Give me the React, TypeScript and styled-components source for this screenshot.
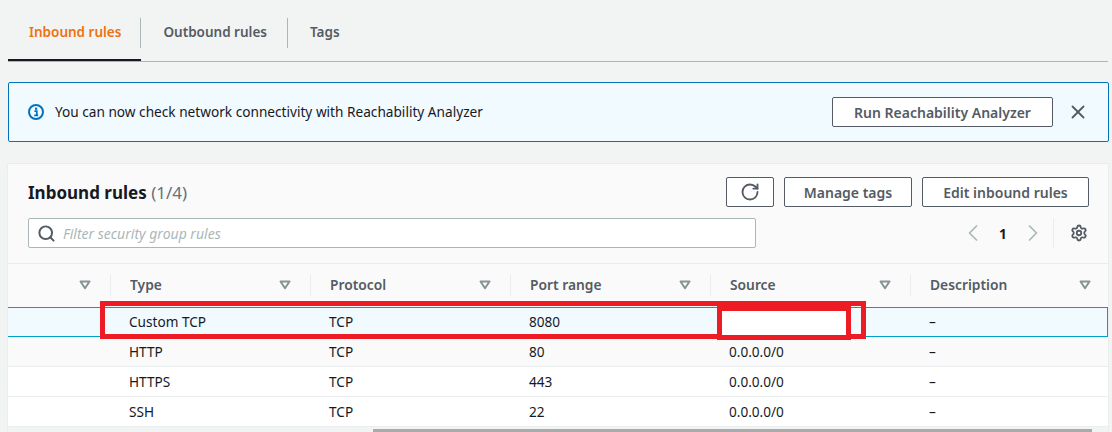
import { ChevronLeft, ChevronRight, RotateCw, Search, Settings, X } from 'lucide-react';
import styled, { createGlobalStyle } from 'styled-components';

const COLUMNS = ['', 'Type', 'Protocol', 'Port range', 'Source', 'Description'];

const RULES = [
  { type: 'Custom TCP', protocol: 'TCP', port: '8080', source: '', description: '–' },
  { type: 'HTTP', protocol: 'TCP', port: '80', source: '0.0.0.0/0', description: '–' },
  { type: 'HTTPS', protocol: 'TCP', port: '443', source: '0.0.0.0/0', description: '–' },
  { type: 'SSH', protocol: 'TCP', port: '22', source: '0.0.0.0/0', description: '–' },
];

const SortCaret = () => (
  <CaretIcon viewBox="0 0 12 10" aria-hidden="true">
    <path d="M1.5 1.5h9L6 8.2z" fill="none" stroke="currentColor" strokeWidth="2" strokeLinejoin="round" />
  </CaretIcon>
);

const InfoIcon = () => (
  <AlertIcon viewBox="0 0 16 16" aria-hidden="true">
    <circle cx="8" cy="8" r="7" fill="none" stroke="currentColor" strokeWidth="2" />
    <rect x="7" y="3.6" width="2.2" height="2.2" fill="currentColor" />
    <path d="M6.4 7.2h2.4v4M6.2 11.4h4" fill="none" stroke="currentColor" strokeWidth="1.7" />
  </AlertIcon>
);

export default function App() {
  return (
    <Page>
      <GlobalStyle />
      <Tabs>
        <Tab $active>Inbound rules</Tab>
        <Tab>Outbound rules</Tab>
        <Tab $last>Tags</Tab>
      </Tabs>

      <Alert>
        <InfoIcon />
        <AlertText>You can now check network connectivity with Reachability Analyzer</AlertText>
        <Button $width={221}>Run Reachability Analyzer</Button>
        <CloseButton aria-label="Close">
          <X size={22} strokeWidth={2} />
        </CloseButton>
      </Alert>

      <Panel>
        <PanelHeader>
          <TitleRow>
            <Title>
              Inbound rules <Counter>(1/4)</Counter>
            </Title>
            <Actions>
              <Button $width={48} aria-label="Refresh">
                <RotateCw size={20} strokeWidth={2.2} />
              </Button>
              <Button $width={128}>Manage tags</Button>
              <Button $width={167}>Edit inbound rules</Button>
            </Actions>
          </TitleRow>
          <FilterRow>
            <FilterBox>
              <SearchIcon />
              <FilterInput placeholder="Filter security group rules" />
            </FilterBox>
            <Pagination>
              <PageArrow />
              <PageNumber>1</PageNumber>
              <PageArrowNext />
              <PageDivider />
              <GearIcon />
            </Pagination>
          </FilterRow>
        </PanelHeader>

        <Table>
          <HeaderRow>
            {COLUMNS.map((name, index) => (
              <HeaderCell key={name || 'select'} $first={index === 0}>
                <span>{name}</span>
                <SortCaret />
              </HeaderCell>
            ))}
          </HeaderRow>

          {RULES.map((rule, index) => (
            <Row key={rule.type} $selected={index === 0} $shaded={index === 1}>
              <Cell />
              <Cell>{rule.type}</Cell>
              <Cell>{rule.protocol}</Cell>
              <Cell>{rule.port}</Cell>
              <Cell>{rule.source}</Cell>
              <Cell>{rule.description}</Cell>
            </Row>
          ))}

          <ScrollTrack>
            <ScrollThumb />
          </ScrollTrack>

          <RowMark />
          <SourceMark />
        </Table>
      </Panel>
    </Page>
  );
}

const GlobalStyle = createGlobalStyle`
  html,
  body {
    margin: 0;
    padding: 0;
    height: 432px;
    overflow: hidden;
    background: #f2f3f3;
  }

  * {
    box-sizing: border-box;
  }
`;

const Page = styled.div`
  width: 1112px;
  height: 432px;
  overflow: hidden;
  padding-left: 8px;
  font-family: 'Noto Sans', 'Open Sans', sans-serif;
  font-size: 13.6px;
  color: #16191f;
`;

const Tabs = styled.div`
  display: flex;
  align-items: center;
  width: 1100px;
  height: 62px;
  border-bottom: 1px solid #aab7b8;
`;

const Tab = styled.div<{ $active?: boolean; $last?: boolean }>`
  position: relative;
  display: flex;
  align-items: center;
  height: 61px;
  padding: 4px 20px 0 21px;
  font-size: 13.5px;
  font-weight: 600;
  color: ${({ $active }) => ($active ? '#ec7211' : '#545b64')};
  border-bottom: 2px solid ${({ $active }) => ($active ? '#16191f' : 'transparent')};

  & + & {
    padding-left: 22px;
    padding-right: 21px;
  }

  &::after {
    content: '';
    display: ${({ $last }) => ($last ? 'none' : 'block')};
    position: absolute;
    top: 18px;
    right: 0;
    width: 1px;
    height: 30px;
    background: #aab7b8;
  }
`;

const Alert = styled.div`
  display: flex;
  align-items: center;
  width: 1101px;
  height: 60px;
  margin-top: 20px;
  padding: 0 19px;
  background: #f1faff;
  border: 1px solid #0073bb;
  border-radius: 2px;
`;

const AlertIcon = styled.svg`
  width: 16px;
  height: 16px;
  margin-right: 11px;
  color: #0073bb;
  flex-shrink: 0;
`;

const AlertText = styled.div`
  flex: 1;
  padding-bottom: 2px;
  font-size: 13.65px;
`;

const Button = styled.button<{ $width: number }>`
  display: flex;
  justify-content: center;
  align-items: center;
  width: ${({ $width }) => $width}px;
  height: 30px;
  padding: 0;
  font-family: inherit;
  font-size: 14px;
  font-weight: 600;
  color: #545b64;
  background: #fff;
  border: 1px solid #545b64;
  border-radius: 2px;
`;

const CloseButton = styled.button`
  display: flex;
  justify-content: center;
  align-items: center;
  width: 22px;
  height: 22px;
  margin-left: 14px;
  padding: 0;
  color: #545b64;
  background: none;
  border: none;
`;

const Panel = styled.div`
  width: 1102px;
  height: 269px;
  margin: 21px 0 0 -1px;
  background: #fafafa;
  border: 1px solid #eaeded;
  border-bottom: none;
`;

const PanelHeader = styled.div`
  height: 100px;
  padding: 13px 19px 0 20px;
  border-bottom: 1px solid #eaeded;
`;

const TitleRow = styled.div`
  display: flex;
  justify-content: space-between;
  align-items: center;
  height: 30px;
`;

const Title = styled.h2`
  margin: 0;
  font-size: 17px;
  font-weight: 700;
  color: #16191f;
`;

const Counter = styled.span`
  font-weight: 400;
  color: #687078;
`;

const Actions = styled.div`
  display: flex;
  gap: 10px;
`;

const FilterRow = styled.div`
  display: flex;
  justify-content: space-between;
  align-items: center;
  margin-top: 11px;
  height: 30px;
`;

const FilterBox = styled.div`
  display: flex;
  align-items: center;
  gap: 7px;
  width: 728px;
  height: 30px;
  padding-left: 8px;
  background: #fff;
  border: 1px solid #aab7b8;
  border-radius: 2px;
`;

const SearchIcon = styled(Search).attrs({ size: 19, strokeWidth: 2.5 })`
  color: #545b64;
  flex-shrink: 0;
`;

const FilterInput = styled.input`
  flex: 1;
  padding: 0;
  font-family: inherit;
  font-size: 14px;
  font-style: italic;
  background: none;
  border: none;
  outline: none;

  &::placeholder {
    color: #aab7b8;
    opacity: 1;
  }
`;

const Pagination = styled.div`
  display: flex;
  align-items: center;
  height: 30px;
`;

const PageArrow = styled(ChevronLeft).attrs({ size: 28, strokeWidth: 1.5 })`
  color: #aab7b8;
`;

const PageArrowNext = styled(ChevronRight).attrs({ size: 28, strokeWidth: 1.5 })`
  color: #aab7b8;
`;

const PageNumber = styled.span`
  width: 32px;
  text-align: center;
  font-size: 13.6px;
  font-weight: 700;
  color: #16191f;
`;

const PageDivider = styled.span`
  width: 1px;
  height: 30px;
  margin: 0 16px 0 6px;
  background: #eaeded;
`;

const GearIcon = styled(Settings).attrs({ size: 18, strokeWidth: 2.4 })`
  margin-right: 1px;
  color: #545b64;
`;

const Table = styled.div`
  position: relative;
`;

const HeaderRow = styled.div`
  display: grid;
  grid-template-columns: 102px repeat(5, 200px);
  height: 43px;
`;

const HeaderCell = styled.div<{ $first?: boolean }>`
  position: relative;
  display: flex;
  justify-content: space-between;
  align-items: center;
  padding: 0 19px 2px 20px;
  font-size: 13.8px;
  font-weight: 600;
  color: #545b64;

  &::after {
    content: '';
    display: ${({ $first }) => ($first ? 'none' : 'block')};
    position: absolute;
    left: 0;
    top: 11px;
    width: 1px;
    height: 21px;
    background: #eaeded;
  }
`;

const CaretIcon = styled.svg`
  width: 12px;
  height: 10px;
  color: #879596;
`;

const Row = styled.div<{ $selected?: boolean; $shaded?: boolean }>`
  display: grid;
  grid-template-columns: 102px repeat(4, 200px) 1fr;
  align-items: center;
  height: 30px;
  padding-bottom: ${({ $selected }) => ($selected ? 2 : 0)}px;
  background: ${({ $selected, $shaded }) => ($selected ? '#f1faff' : $shaded ? '#fafafa' : '#fff')};
  border: ${({ $selected }) => ($selected ? '1px solid #00a1c9' : 'none')};
  border-left: none;
  border-bottom: ${({ $selected }) => ($selected ? '1px solid #00a1c9' : '1px solid #eaeded')};
`;

const Cell = styled.div`
  padding-left: 19px;
  font-size: 13.6px;
  color: #16191f;
`;

const ScrollTrack = styled.div`
  height: 6px;
  padding: 2px 16px 0 365px;
  background: #f2f3f3;
`;

const ScrollThumb = styled.div`
  height: 4px;
  background: #aaa;
`;

const RowMark = styled.div`
  position: absolute;
  left: 92px;
  top: 37px;
  width: 766px;
  height: 38px;
  border: 5px solid #ed1c24;
`;

const SourceMark = styled.div`
  position: absolute;
  left: 709px;
  top: 38px;
  width: 134px;
  height: 38px;
  background: #fff;
  border: 5px solid #ed1c24;
  border-top-width: 9px;
`;
